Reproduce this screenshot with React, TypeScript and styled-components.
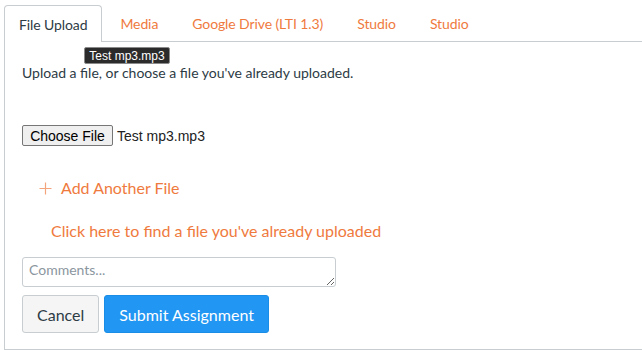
import styled, { createGlobalStyle } from "styled-components";

const Global = createGlobalStyle`
  html, body { margin: 0; padding: 0; background: #fff; }
  body { font-family: Lato, "Liberation Sans", sans-serif; color: #2d3b45; }
`;

const orange = "#ef7a3e";

const Wrapper = styled.div`
  position: relative;
  padding: 5px 0 0 4px;
  width: 638px;
  height: 345px;
`;

const TabList = styled.div`
  display: flex;
  align-items: flex-end;
  border-bottom: 1px solid #c7cdd1;
  height: 36px;
`;

const Tab = styled.div<{ $active?: boolean }>`
  box-sizing: border-box;
  display: flex;
  align-items: center;
  font-size: 14px;
  padding: ${(p) => (p.$active ? "0 14px" : "0 15px")};
  margin-left: ${(p) => (p.$active ? "0" : "2px")};
  color: ${(p) => (p.$active ? "#2d3b45" : orange)};
  background: ${(p) => (p.$active ? "#fff" : "transparent")};
  border: ${(p) => (p.$active ? "1px solid #c7cdd1" : "1px solid transparent")};
  border-bottom: none;
  border-radius: 4px 4px 0 0;
  height: ${(p) => (p.$active ? "37px" : "36px")};
  margin-bottom: ${(p) => (p.$active ? "-1px" : "0")};
  letter-spacing: -0.1px;
`;

const Panel = styled.div`
  border-left: 1px solid #c7cdd1;
  border-bottom: 1px solid #c7cdd1;
  height: 308px;
  box-sizing: border-box;
  padding: 22px 0 0 17px;
  display: flex;
  flex-direction: column;
  align-items: flex-start;
`;

const Intro = styled.p`
  margin: 0;
  font-size: 14px;
  line-height: 17px;
`;

const FileRow = styled.div`
  display: flex;
  align-items: center;
  gap: 4px;
  margin-top: 44px;
  font-family: "Liberation Sans", Arial, sans-serif;
  font-size: 14px;
  color: #222;
`;

const FileButton = styled.div`
  box-sizing: border-box;
  height: 21px;
  width: 91px;
  display: flex;
  align-items: center;
  justify-content: center;
  background: #efefef;
  border: 1px solid #767676;
  border-radius: 2px;
  color: #000;
`;

const AddLink = styled.div`
  display: flex;
  align-items: center;
  gap: 9px;
  margin: 32px 0 0 17px;
  font-size: 16px;
  color: ${orange};
  line-height: 20px;
`;

const FindLink = styled.div`
  margin: 23px 0 0 29px;
  font-size: 16px;
  color: ${orange};
  line-height: 20px;
`;

const Comments = styled.textarea`
  box-sizing: border-box;
  margin-top: 16px;
  width: 314px;
  height: 30px;
  border: 1px solid #c7cdd1;
  border-radius: 3px;
  padding: 3px 6px;
  font-family: Lato, "Liberation Sans", sans-serif;
  font-size: 14px;
  color: #2d3b45;
  &::placeholder { color: #8b969e; }
`;

const Actions = styled.div`
  display: flex;
  gap: 5px;
  margin-top: 8px;
`;

const Button = styled.button<{ $primary?: boolean }>`
  box-sizing: border-box;
  height: 38px;
  padding: 0 14px;
  font-family: Lato, "Liberation Sans", sans-serif;
  font-size: 16px;
  border-radius: 3px;
  border: 1px solid ${(p) => (p.$primary ? "#1a8de6" : "#c7cdd1")};
  background: ${(p) => (p.$primary ? "#2196f3" : "#f5f5f5")};
  color: ${(p) => (p.$primary ? "#fff" : "#2d3b45")};
`;

const Tooltip = styled.div`
  position: absolute;
  left: 84px;
  top: 47px;
  box-sizing: border-box;
  height: 17px;
  width: 86px;
  display: flex;
  align-items: center;
  justify-content: center;
  background: #2b2b2b;
  border: 1px solid #8a8a8a;
  border-radius: 2px;
  color: #fff;
  font-family: "Liberation Sans", Arial, sans-serif;
  font-size: 12px;
`;

const Plus = () => (
  <svg width="13" height="13" viewBox="0 0 13 13">
    <path d="M6.5 0.5v12M0.5 6.5h12" stroke="#f4a47a" strokeWidth="1.2" fill="none" />
  </svg>
);

export default function App() {
  return (
    <Wrapper>
      <Global />
      <TabList>
        <Tab $active>File Upload</Tab>
        <Tab>Media</Tab>
        <Tab>Google Drive (LTI 1.3)</Tab>
        <Tab>Studio</Tab>
        <Tab>Studio</Tab>
      </TabList>
      <Panel>
        <Intro>Upload a file, or choose a file you've already uploaded.</Intro>
        <FileRow>
          <FileButton>Choose File</FileButton>
          <span>Test mp3.mp3</span>
        </FileRow>
        <AddLink>
          <Plus />
          Add Another File
        </AddLink>
        <FindLink>Click here to find a file you've already uploaded</FindLink>
        <Comments placeholder="Comments..." />
        <Actions>
          <Button>Cancel</Button>
          <Button $primary>Submit Assignment</Button>
        </Actions>
      </Panel>
      <Tooltip>Test mp3.mp3</Tooltip>
    </Wrapper>
  );
}
